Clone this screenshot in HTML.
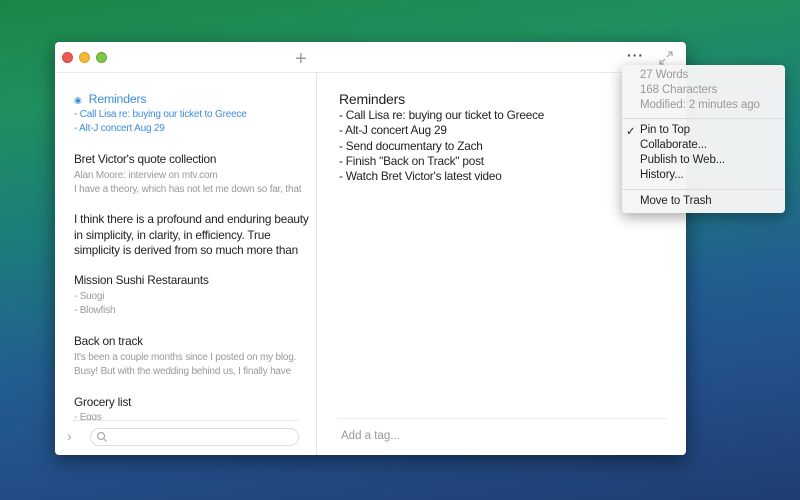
<!DOCTYPE html>
<html><head><meta charset="utf-8"><style>
*{margin:0;padding:0;box-sizing:border-box}
body{width:800px;height:500px;overflow:hidden;position:relative;font-family:"Liberation Sans",sans-serif;
background:linear-gradient(172deg,#1c8648 0%,#20905f 18%,#1c7c7c 40%,#225d90 62%,#234d88 80%,#1e3d70 100%)}
.win{position:absolute;left:55px;top:42px;width:631px;height:413px;background:#fff;border-radius:4px;box-shadow:0 6px 20px rgba(0,0,0,.45);overflow:hidden}
.tb{height:31px;border-bottom:1px solid #e8e8e8;position:relative}
.dot{position:absolute;top:10px;width:11px;height:11px;border-radius:50%}
.side{position:absolute;left:0;top:31px;width:262px;bottom:0;border-right:1px solid #e6e6e6}
.t{position:absolute;left:19px;font-size:11.8px;color:#222;letter-spacing:-.2px;white-space:nowrap}
.s{position:absolute;left:19px;font-size:10px;color:#999;letter-spacing:-.2px;white-space:nowrap;line-height:13px}
.b{color:#3b8ddb}
.ed{position:absolute;left:284px;top:50px;font-size:11.8px;color:#222;letter-spacing:-.2px;line-height:15.2px}
.menu{position:absolute;left:622px;top:65px;width:163px;height:148px;background:rgba(245,245,245,.97);border-radius:4px;box-shadow:0 4px 14px rgba(0,0,0,.35);font-size:11.5px;color:#222;letter-spacing:-.1px}
.menu div{position:absolute;left:18px;white-space:nowrap}
.g{color:#999}
.hr{position:absolute;left:0!important;right:0;height:1px;background:#dcdcdc}
</style></head><body>
<div class="win">
 <div class="tb">
  <div class="dot" style="left:7px;background:#ec5b55;border:1px solid #d14a43"></div>
  <div class="dot" style="left:24px;background:#f2b93b;border:1px solid #d89f2a"></div>
  <div class="dot" style="left:41px;background:#7fc54a;border:1px solid #62a83a"></div>
  <div style="position:absolute;left:240px;top:6px;font-size:20px;color:#999;font-weight:300">+</div>
  <div style="position:absolute;left:572px;top:5px;font-size:14px;color:#444;letter-spacing:1px;font-weight:bold">···</div>
  <svg style="position:absolute;left:604px;top:9px" width="14" height="14" viewBox="0 0 14 14" fill="none" stroke="#aaa" stroke-width="1.2"><path d="M8 6L13 1M9 1h4v4M6 8L1 13M1 9v4h4"/></svg>
 </div>
 <div class="side">
  <div class="t b" style="top:19px;font-size:12.3px"><span style="font-size:9px;margin-right:7px">◉</span>Reminders</div>
  <div class="s b" style="top:35px;line-height:14px">- Call Lisa re: buying our ticket to Greece<br>- Alt-J concert Aug 29</div>
  <div class="t" style="top:79px">Bret Victor's quote collection</div>
  <div class="s" style="top:96px;line-height:14px">Alan Moore: interview on mtv.com<br>I have a theory, which has not let me down so far, that</div>
  <div class="t" style="top:139px;line-height:15.5px">I think there is a profound and enduring beauty<br>in simplicity, in clarity, in efficiency. True<br>simplicity is derived from so much more than</div>
  <div class="t" style="top:200px">Mission Sushi Restaraunts</div>
  <div class="s" style="top:257px;line-height:14px;top:257px;display:none"></div>
  <div class="s" style="top:257px;display:none"></div>
  <div class="s" style="top:217px;line-height:14px">- Suogi<br>- Blowfish</div>
  <div class="t" style="top:261px">Back on track</div>
  <div class="s" style="top:278px;line-height:14px">It's been a couple months since I posted on my blog.<br>Busy! But with the wedding behind us, I finally have</div>
  <div class="t" style="top:322px">Grocery list</div>
  <div class="s" style="top:338px;height:9px;overflow:hidden">- Eggs</div>
  <div style="position:absolute;left:18px;right:18px;top:347px;height:1px;background:#e8e8e8"></div>
  <div style="position:absolute;left:12px;top:355px;color:#aaa;font-size:14px">›</div>
  <div style="position:absolute;left:35px;top:355px;width:209px;height:18px;border:1px solid #ddd;border-radius:9px"></div>
  <svg style="position:absolute;left:41px;top:358px" width="12" height="12" viewBox="0 0 12 12" fill="none" stroke="#aaa" stroke-width="1.2"><circle cx="5" cy="5" r="3.5"/><path d="M7.5 7.5L10.5 10.5"/></svg>
 </div>
 <div class="ed"><div style="font-size:14px;margin-bottom:1px">Reminders</div>- Call Lisa re: buying our ticket to Greece<br>- Alt-J concert Aug 29<br>- Send documentary to Zach<br>- Finish "Back on Track" post<br>- Watch Bret Victor's latest video</div>
 <div style="position:absolute;left:282px;right:18px;top:376px;height:1px;background:#eee"></div>
 <div style="position:absolute;left:286px;top:388px;font-size:11.5px;color:#999">Add a tag...</div>
</div>
<div class="menu">
 <div class="g" style="top:4px">27 Words</div>
 <div class="g" style="top:19px">168 Characters</div>
 <div class="g" style="top:34px">Modified: 2 minutes ago</div>
 <div class="hr" style="top:53px"></div>
 <div style="top:59px;left:4px">✓</div>
 <div style="top:59px">Pin to Top</div>
 <div style="top:74px">Collaborate...</div>
 <div style="top:89px">Publish to Web...</div>
 <div style="top:104px">History...</div>
 <div class="hr" style="top:124px"></div>
 <div style="top:130px">Move to Trash</div>
</div>
</body></html>
